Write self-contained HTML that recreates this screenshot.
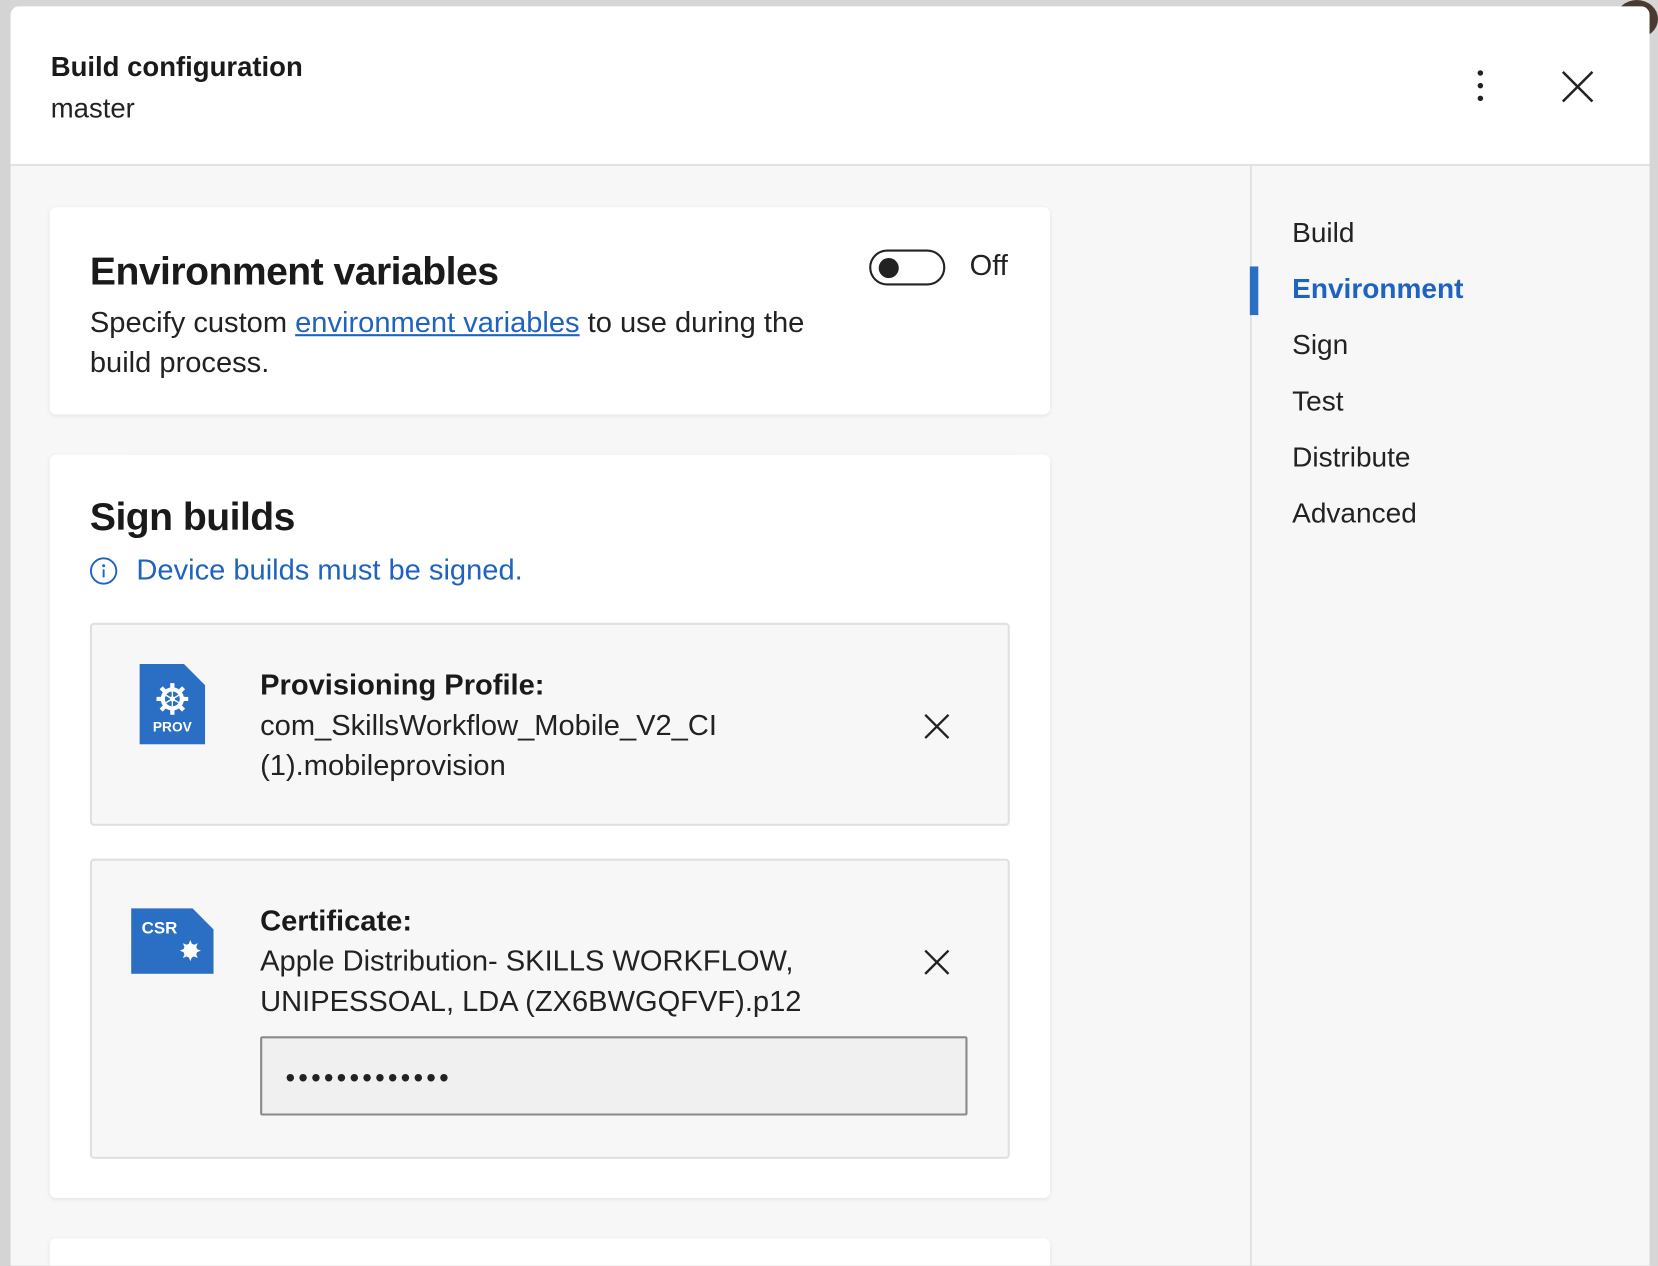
<!DOCTYPE html>
<html><head><meta charset="utf-8"><style>
html,body{margin:0;padding:0;width:1658px;height:1266px;overflow:hidden;background:#d6d6d6;font-family:"Liberation Sans",sans-serif;color:#222}
#w{position:absolute;left:0;top:0;width:1568px;height:1197px;overflow:hidden;transform:scale(1.0574);transform-origin:0 0;background:#d6d6d6}
.modal{position:absolute;left:10px;top:6px;width:1550px;height:1191px;background:#f7f7f7;border-radius:8px 8px 0 0;overflow:hidden}
.hdr{position:absolute;left:0;top:0;width:1550px;height:149px;background:#fff;border-bottom:2px solid #e3e3e3}
.t1{position:absolute;left:38px;top:42px;font-size:26px;font-weight:bold;color:#1a1a1a}
.t2{position:absolute;left:38px;top:81px;font-size:26px;color:#222}
.card{position:absolute;left:37px;width:946px;background:#fff;border-radius:6px;box-shadow:0 1px 4px rgba(0,0,0,.08)}
h2{margin:0;position:absolute;font-size:37px;font-weight:bold;color:#1a1a1a;letter-spacing:-0.5px}
.p{position:absolute;font-size:27.5px;line-height:38px;color:#222}
a{color:#1f63c0}
.sub{position:absolute;left:38px;width:866px;background:#f7f7f7;border:2px solid #e0e0e0;border-radius:4px}
.lbl{position:absolute;left:159px;font-size:27.5px;line-height:38px;color:#222;white-space:nowrap}
.lbl b{color:#1a1a1a}
.nav{position:absolute;left:1172px;top:149px;width:378px;height:1100px;border-left:2px solid #e2e2e2}
.nav div{position:absolute;left:38px;font-size:26.5px;color:#222}
</style></head><body><div id="w">
<div style="position:absolute;left:0;top:0;width:10px;height:1197px;background:#d4d4d4"></div>
<div style="position:absolute;left:1528px;top:0;width:40px;height:36px;border-radius:50%;background:#4a3a30;"></div>
<div class="modal">
 <div class="hdr">
  <div class="t1">Build configuration</div>
  <div class="t2">master</div>
  <svg style="position:absolute;left:1383px;top:58px" width="14" height="34"><circle cx="7" cy="5" r="2.6" fill="#222"/><circle cx="7" cy="17" r="2.6" fill="#222"/><circle cx="7" cy="29" r="2.6" fill="#222"/></svg>
  <svg style="position:absolute;left:1466px;top:60px" width="32" height="32"><path d="M2 2L30 30M30 2L2 30" stroke="#222" stroke-width="2.4"/></svg>
 </div>
 <div class="card" style="top:190px;height:196px">
  <h2 style="left:38px;top:40px">Environment variables</h2>
  <div class="p" style="left:38px;top:90px;width:720px">Specify custom <a href="#">environment variables</a> to use during the build process.</div>
  <div style="position:absolute;left:775px;top:40px;width:68px;height:30px;border:2px solid #222;border-radius:17px"><div style="position:absolute;left:7px;top:6px;width:19px;height:19px;border-radius:50%;background:#222"></div></div>
  <div class="p" style="left:870px;top:36px">Off</div>
 </div>
 <div class="card" style="top:424px;height:703px">
  <h2 style="left:38px;top:38px">Sign builds</h2>
  <svg style="position:absolute;left:37px;top:96px" width="28" height="28"><circle cx="14" cy="14" r="12" fill="none" stroke="#1f63c0" stroke-width="1.8"/><circle cx="14" cy="9" r="1.4" fill="#1f63c0"/><path d="M14 12.5V20" stroke="#1f63c0" stroke-width="1.8"/></svg>
  <div class="p" style="left:82px;top:90px;color:#1f63c0">Device builds must be signed.</div>
  <div class="sub" style="top:159px;height:188px">
   <svg style="position:absolute;left:45px;top:37px" width="62" height="76"><path d="M0 0H42L62 20V76H0Z" fill="#2a6fc4"/><g transform="translate(31,33)" fill="#fff"><circle r="11"/><g stroke="#fff" stroke-width="4"><path d="M0 -15V15M-15 0H15M-10.6 -10.6L10.6 10.6M10.6 -10.6L-10.6 10.6"/></g><circle r="7" fill="#2a6fc4"/><circle r="2.5"/><path d="M0 -7V7M-6 -3.5L6 3.5M6 -3.5L-6 3.5" stroke="#fff" stroke-width="1.3"/></g><text x="31" y="64" font-size="13" font-weight="bold" fill="#fff" text-anchor="middle" font-family="Liberation Sans">PROV</text></svg>
   <div class="lbl" style="top:38px"><b>Provisioning Profile:</b><br>com_SkillsWorkflow_Mobile_V2_CI<br>(1).mobileprovision</div>
   <svg style="position:absolute;left:786px;top:83px" width="26" height="26"><path d="M2 2L24 24M24 2L2 24" stroke="#222" stroke-width="2.2"/></svg>
  </div>
  <div class="sub" style="top:382px;height:280px">
   <svg style="position:absolute;left:37px;top:45px" width="78" height="62"><path d="M0 0H58L78 20V62H0Z" fill="#2a6fc4"/><text x="10" y="24" font-size="16" font-weight="bold" fill="#fff" font-family="Liberation Sans">CSR</text><g transform="translate(56,40)" fill="#fff"><circle r="6.5"/><path d="M0 -10L2 -5 7 -7 5 -2 10 0 5 2 7 7 2 5 0 10 -2 5 -7 7 -5 2 -10 0 -5 -2 -7 -7 -2 -5Z"/></g></svg>
   <div class="lbl" style="top:38px"><b>Certificate:</b><br>Apple Distribution- SKILLS WORKFLOW,<br>UNIPESSOAL, LDA (ZX6BWGQFVF).p12</div>
   <svg style="position:absolute;left:786px;top:83px" width="26" height="26"><path d="M2 2L24 24M24 2L2 24" stroke="#222" stroke-width="2.2"/></svg>
   <div style="position:absolute;left:159px;top:166px;width:665px;height:71px;background:#f0f0f0;border:2px solid #8a8a8a;border-radius:2px"><div style="position:absolute;left:22px;top:22px;font-size:26px;letter-spacing:3px;color:#222">•••••••••••••</div></div>
  </div>
 </div>
 <div class="card" style="top:1165px;height:100px"></div>
 <div class="nav">
  <div style="top:50px">Build</div>
  <div style="top:103px;color:#1f63c0;font-weight:bold">Environment</div>
  <div style="position:absolute;left:-2px;top:97px;width:8px;height:46px;background:#2a6fc4"></div>
  <div style="top:156px">Sign</div>
  <div style="top:209px">Test</div>
  <div style="top:262px">Distribute</div>
  <div style="top:315px">Advanced</div>
 </div>
</div>
</div></body></html>
